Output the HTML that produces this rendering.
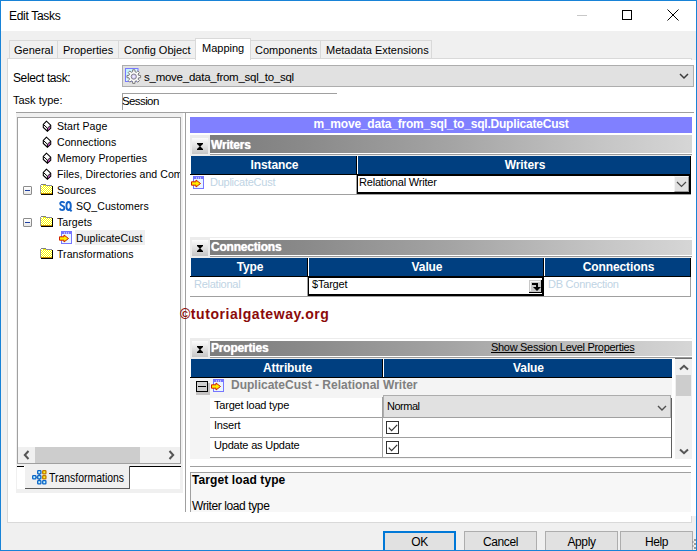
<!DOCTYPE html>
<html><head><meta charset="utf-8">
<style>
*{box-sizing:border-box;margin:0;padding:0}
html,body{width:697px;height:551px;overflow:hidden;background:#f0f0f0;font-family:"Liberation Sans",sans-serif;color:#000}
.a{position:absolute}
.t{position:absolute;white-space:nowrap;font-size:11px;line-height:13px}
.g{font-size:11px;letter-spacing:0.05px;transform:scaleX(0.96);transform-origin:0 0}
.mb{width:9px;height:9px;border:1px solid #8c8c8c;border-radius:1px;background:linear-gradient(#fff,#e6e6e6)}
.mb::after{content:"";position:absolute;left:1px;top:3px;width:5px;height:1px;background:#2040a0}
.sec{background:#ececec}
.btn{width:16px;height:16px;background:linear-gradient(#fcfcfc,#c6c6c6)}
.bar{background:linear-gradient(90deg,#7c7c7c,#8a8a8a 20%,#a4a4a4 50%,#c4c4c4 80%,#d6d6d6)}
.bt{font-weight:bold;color:#fff;font-size:12px;letter-spacing:-0.2px;line-height:14px;text-shadow:0 0 1px #fff}
.nv{background:#003f80}
.hd{font-weight:bold;color:#fff;font-size:12px;text-align:center;letter-spacing:-0.1px;line-height:14px;padding-left:2px}
.dis{color:#c0d4e4;font-size:11px;letter-spacing:-0.25px}
.gr{font-size:11px;letter-spacing:-0.2px}
.cb{width:13px;height:13px;border:1px solid #333;background:#fff}
.b{font-weight:bold;font-size:12px;letter-spacing:-0.2px;line-height:14px}
.u{font-size:12px;letter-spacing:-0.4px;line-height:14px}
</style></head><body>
<!-- title bar -->
<div class="a" style="left:0;top:0;width:697px;height:31px;background:#fff"></div>
<div class="t u" style="left:9px;top:9px;letter-spacing:-0.3px">Edit Tasks</div>
<div class="a" style="left:577px;top:15px;width:10px;height:1px;background:#c8c8c8"></div>
<div class="a" style="left:622px;top:10px;width:10px;height:10px;border:1px solid #000"></div>
<svg class="a" style="left:667px;top:9px" width="12" height="12"><path d="M0.5 0.5L11.5 11.5M11.5 0.5L0.5 11.5" stroke="#000" stroke-width="1"/></svg>

<!-- tabs -->
<div class="a" style="left:9px;top:40px;width:423px;height:19px;background:#f0f0f0;border:1px solid #d9d9d9;border-bottom:none"></div>
<div class="a" style="left:57px;top:40px;width:1px;height:18px;background:#d9d9d9"></div>
<div class="a" style="left:118px;top:40px;width:1px;height:18px;background:#d9d9d9"></div>
<div class="a" style="left:320px;top:40px;width:1px;height:18px;background:#d9d9d9"></div>
<!-- panel -->
<div class="a" style="left:7px;top:58px;width:689px;height:465px;background:#fff;border:1px solid #d9d9d9;border-right:none"></div>
<div class="a" style="left:692px;top:58px;width:4px;height:2px;background:#f0f0f0"></div>
<div class="a" style="left:691px;top:58px;width:1px;height:2px;background:#d9d9d9"></div>
<div class="a" style="left:691px;top:516px;width:1px;height:7px;background:#d9d9d9"></div>
<div class="a" style="left:692px;top:516px;width:4px;height:7px;background:#f0f0f0"></div>
<!-- selected tab -->
<div class="a" style="left:195px;top:38px;width:56px;height:22px;background:#fff;border:1px solid #d9d9d9;border-bottom:none"></div>
<div class="t" style="left:14px;top:44px">General</div>
<div class="t" style="left:63px;top:44px">Properties</div>
<div class="t" style="left:124px;top:44px">Config Object</div>
<div class="t" style="left:202px;top:42px">Mapping</div>
<div class="t" style="left:255px;top:44px">Components</div>
<div class="t" style="left:326px;top:44px">Metadata Extensions</div>

<!-- select task -->
<div class="t u" style="left:13px;top:71px">Select task:</div>
<div class="a" style="left:122px;top:65px;width:572px;height:22px;background:#e1e1e1;border:1px solid #adadad"></div>
<svg class="a" style="left:125px;top:68px" width="18" height="18" viewBox="0 0 18 18">
<defs><linearGradient id="gb" x1="0" y1="0" x2="1" y2="1"><stop offset="0" stop-color="#b8f0ff"/><stop offset="1" stop-color="#fff"/></linearGradient>
<radialGradient id="gc"><stop offset="0" stop-color="#fff"/><stop offset="1" stop-color="#b8a8f0"/></radialGradient></defs>
<rect x="0.5" y="0.5" width="12.5" height="13" fill="url(#gb)" stroke="#7878ff" stroke-width="1"/>
<path d="M15.61 7.47L15.61 9.73L13.65 9.81L13.08 11.18L14.41 12.61L12.81 14.21L11.38 12.88L10.01 13.45L9.93 15.41L7.67 15.41L7.59 13.45L6.22 12.88L4.79 14.21L3.19 12.61L4.52 11.18L3.950 9.81L1.99 9.73L1.99 7.47L3.95 7.39L4.52 6.02L3.19 4.59L4.79 2.99L6.22 4.32L7.59 3.75L7.67 1.79L9.930 1.79L10.01 3.75L11.38 4.32L12.81 2.99L14.41 4.59L13.08 6.02L13.65 7.39Z" fill="#fafafa" stroke="#7a7a7a" stroke-width="1"/>
<circle cx="8.8" cy="8.6" r="2.6" fill="url(#gc)" stroke="#8a8a8a" stroke-width="1"/>
</svg>
<div class="t" style="left:144px;top:71px;font-size:11.5px;letter-spacing:-0.25px">s_move_data_from_sql_to_sql</div>
<svg class="a" style="left:679px;top:73px" width="11" height="7"><path d="M1 1L5 5L9 1" fill="none" stroke="#3c3c3c" stroke-width="1.5"/></svg>

<div class="t" style="left:13px;top:94px">Task type:</div>
<div class="a" style="left:122px;top:93px;width:215px;height:1px;background:#a0a0a0"></div>
<div class="a" style="left:122px;top:93px;width:1px;height:17px;background:#a0a0a0"></div>
<div class="t" style="left:122px;top:95px;font-size:11.5px;letter-spacing:-0.6px">Session</div>

<!-- splitter line -->
<div class="a" style="left:16px;top:112px;width:678px;height:1px;background:#a0a0a0"></div>
<div class="a" style="left:16px;top:113px;width:167px;height:380px;background:#f0f0f0"></div>
<div class="a" style="left:185px;top:113px;width:1px;height:399px;background:#a0a0a0"></div>

<!-- tree box -->
<div class="a" style="left:17px;top:117px;width:164px;height:347px;background:#fff;border:1px solid #a0a0a0"></div>

<!-- tree items -->
<svg class="a" style="left:42px;top:120px" width="11" height="13" viewBox="0 0 11 13"><path d="M4.5 1.2L1.3 4.4L1.3 7.5L5.4 11.2L8.7 8.3L8.7 5.2Z" fill="#fff" stroke="#000" stroke-width="1.1" stroke-linejoin="miter"/><path d="M1.3 4.4L5.4 8.2L8.7 5.2M5.4 8.2L5.4 11.2" fill="none" stroke="#000" stroke-width="1"/><path d="M5.9 8.9L8.2 6.6L8.2 8.1L5.9 10.3Z" fill="#8a008a"/></svg>
<svg class="a" style="left:42px;top:136px" width="11" height="13" viewBox="0 0 11 13"><path d="M4.5 1.2L1.3 4.4L1.3 7.5L5.4 11.2L8.7 8.3L8.7 5.2Z" fill="#fff" stroke="#000" stroke-width="1.1" stroke-linejoin="miter"/><path d="M1.3 4.4L5.4 8.2L8.7 5.2M5.4 8.2L5.4 11.2" fill="none" stroke="#000" stroke-width="1"/><path d="M5.9 8.9L8.2 6.6L8.2 8.1L5.9 10.3Z" fill="#8a008a"/></svg>
<svg class="a" style="left:42px;top:152px" width="11" height="13" viewBox="0 0 11 13"><path d="M4.5 1.2L1.3 4.4L1.3 7.5L5.4 11.2L8.7 8.3L8.7 5.2Z" fill="#fff" stroke="#000" stroke-width="1.1" stroke-linejoin="miter"/><path d="M1.3 4.4L5.4 8.2L8.7 5.2M5.4 8.2L5.4 11.2" fill="none" stroke="#000" stroke-width="1"/><path d="M5.9 8.9L8.2 6.6L8.2 8.1L5.9 10.3Z" fill="#8a008a"/></svg>
<svg class="a" style="left:42px;top:168px" width="11" height="13" viewBox="0 0 11 13"><path d="M4.5 1.2L1.3 4.4L1.3 7.5L5.4 11.2L8.7 8.3L8.7 5.2Z" fill="#fff" stroke="#000" stroke-width="1.1" stroke-linejoin="miter"/><path d="M1.3 4.4L5.4 8.2L8.7 5.2M5.4 8.2L5.4 11.2" fill="none" stroke="#000" stroke-width="1"/><path d="M5.9 8.9L8.2 6.6L8.2 8.1L5.9 10.3Z" fill="#8a008a"/></svg>
<div class="t g" style="left:57px;top:120px">Start Page</div>
<div class="t g" style="left:57px;top:136px">Connections</div>
<div class="t g" style="left:57px;top:152px">Memory Properties</div>
<div class="a" style="left:18px;top:165px;width:162px;height:16px;overflow:hidden"><div class="t g" style="left:39px;top:3px">Files, Directories and Commands</div></div>
<!-- minus boxes -->
<div class="a mb" style="left:23px;top:186px"></div>
<div class="a mb" style="left:23px;top:218px"></div>
<!-- folders -->
<svg class="a" style="left:40px;top:184px" width="14" height="12" viewBox="0 0 14 12" shape-rendering="crispEdges"><defs><pattern id="dz184" width="2" height="2" patternUnits="userSpaceOnUse"><rect width="2" height="2" fill="#ffff00"/><rect x="1" y="1" width="1" height="1" fill="#ffffff"/><rect x="0" y="0" width="1" height="1" fill="#ffffff"/></pattern></defs><rect x="0" y="1" width="1" height="9" fill="#9a9aa8"/><rect x="1" y="0" width="5" height="1" fill="#808080"/><rect x="1" y="1" width="2" height="1" fill="#fff"/><rect x="3" y="1" width="3" height="1" fill="#f0f000"/><rect x="6" y="1" width="6" height="1" fill="#8a8aa0"/><rect x="1" y="2" width="11" height="7" fill="url(#dz184)"/><rect x="1" y="9" width="11" height="1" fill="#c89000"/><rect x="12" y="2" width="1" height="9" fill="#000"/><rect x="1" y="10" width="12" height="1" fill="#000"/></svg>
<svg class="a" style="left:40px;top:216px" width="14" height="12" viewBox="0 0 14 12" shape-rendering="crispEdges"><defs><pattern id="dz216" width="2" height="2" patternUnits="userSpaceOnUse"><rect width="2" height="2" fill="#ffff00"/><rect x="1" y="1" width="1" height="1" fill="#ffffff"/><rect x="0" y="0" width="1" height="1" fill="#ffffff"/></pattern></defs><rect x="0" y="1" width="1" height="9" fill="#9a9aa8"/><rect x="1" y="0" width="5" height="1" fill="#808080"/><rect x="1" y="1" width="2" height="1" fill="#fff"/><rect x="3" y="1" width="3" height="1" fill="#f0f000"/><rect x="6" y="1" width="6" height="1" fill="#8a8aa0"/><rect x="1" y="2" width="11" height="7" fill="url(#dz216)"/><rect x="1" y="9" width="11" height="1" fill="#c89000"/><rect x="12" y="2" width="1" height="9" fill="#000"/><rect x="1" y="10" width="12" height="1" fill="#000"/></svg>
<svg class="a" style="left:40px;top:248px" width="14" height="12" viewBox="0 0 14 12" shape-rendering="crispEdges"><defs><pattern id="dz248" width="2" height="2" patternUnits="userSpaceOnUse"><rect width="2" height="2" fill="#ffff00"/><rect x="1" y="1" width="1" height="1" fill="#ffffff"/><rect x="0" y="0" width="1" height="1" fill="#ffffff"/></pattern></defs><rect x="0" y="1" width="1" height="9" fill="#9a9aa8"/><rect x="1" y="0" width="5" height="1" fill="#808080"/><rect x="1" y="1" width="2" height="1" fill="#fff"/><rect x="3" y="1" width="3" height="1" fill="#f0f000"/><rect x="6" y="1" width="6" height="1" fill="#8a8aa0"/><rect x="1" y="2" width="11" height="7" fill="url(#dz248)"/><rect x="1" y="9" width="11" height="1" fill="#c89000"/><rect x="12" y="2" width="1" height="9" fill="#000"/><rect x="1" y="10" width="12" height="1" fill="#000"/></svg>
<div class="t g" style="left:57px;top:184px">Sources</div>
<svg class="a" style="left:59px;top:201px" width="14" height="11" viewBox="0 0 14 11"><path d="M5.3 2.2C5.2 1.2 4.3 0.9 3.2 0.9C1.9 0.9 1.2 1.6 1.2 2.6C1.2 3.8 2.2 4.3 3.2 4.7C4.3 5.1 5.4 5.6 5.4 7C5.4 8.3 4.5 9.1 3.1 9.1C1.8 9.1 1 8.5 0.9 7.4" fill="none" stroke="#1464c8" stroke-width="1.9"/><ellipse cx="9.6" cy="5" rx="2.2" ry="4.05" fill="none" stroke="#1464c8" stroke-width="1.9"/><path d="M10.2 7.6L12.6 10.4" stroke="#1464c8" stroke-width="1.9"/></svg>
<div class="t g" style="left:76px;top:200px">SQ_Customers</div>
<div class="t g" style="left:57px;top:216px">Targets</div>
<div class="a" style="left:75px;top:230px;width:70px;height:15px;background:#efefef"></div>
<svg class="a tgt" style="left:59px;top:231px" width="13" height="14" viewBox="0 0 13 14"><rect x="2.5" y="0.5" width="10" height="12" fill="#eaf6ff" stroke="#7676ff"/><rect x="3" y="1" width="9" height="2" fill="#7676ff"/><rect x="5" y="1.5" width="1" height="1" fill="#fff"/><rect x="7" y="1.5" width="1" height="1" fill="#fff"/><rect x="9" y="1.5" width="1" height="1" fill="#fff"/><path d="M0.5 5.8L5 5.8L5 4L9.5 7.5L5 11L5 9.2L0.5 9.2Z" fill="#ffee00" stroke="#d02000" stroke-width="1"/></svg>
<div class="t g" style="left:76px;top:232px">DuplicateCust</div>
<div class="t g" style="left:57px;top:248px">Transformations</div>

<!-- tree h-scroll -->
<div class="a" style="left:18px;top:447px;width:162px;height:16px;background:#f0f0f0"></div>
<div class="a" style="left:35px;top:447px;width:105px;height:16px;background:#cdcdcd"></div>
<svg class="a" style="left:22px;top:450px" width="10" height="10"><path d="M6.5 1L2.8 5L6.5 9" fill="none" stroke="#555" stroke-width="2"/></svg>
<svg class="a" style="left:167px;top:450px" width="10" height="10"><path d="M2.5 1L6.2 5L2.5 9" fill="none" stroke="#555" stroke-width="2"/></svg>
<!-- left tab strip -->
<div class="a" style="left:16px;top:465px;width:167px;height:28px;background:#f0f0f0"></div>
<div class="a" style="left:17px;top:466px;width:163px;height:23px;background:#fff"></div>
<div class="a" style="left:17px;top:466px;width:7px;height:1px;background:#000"></div>
<div class="a" style="left:129px;top:466px;width:52px;height:1px;background:#000"></div>
<div class="a" style="left:25px;top:466px;width:105px;height:23px;background:#f0f0f0;border-right:1px solid #5a5a5a;border-bottom:1px solid #5a5a5a"></div>
<svg class="a" style="left:32px;top:470px" width="15" height="15" viewBox="0 0 15 15"><path d="M4 7.2H5.5M7.2 4V5.5M7.2 9V10.5" stroke="#404040" stroke-width="1"/><rect x="5.7" y="0.7" width="3.2" height="3.2" rx="0.6" fill="#c8f8ff" stroke="#0a64c8" stroke-width="1.3"/><rect x="10.7" y="0.7" width="3.2" height="3.2" rx="0.6" fill="#f8f020" stroke="#c07800" stroke-width="1.3"/><rect x="0.7" y="5.7" width="3.2" height="3.2" rx="0.6" fill="#c8f8ff" stroke="#0a64c8" stroke-width="1.3"/><rect x="5.7" y="5.7" width="3.2" height="3.2" rx="0.6" fill="#c8f8ff" stroke="#0a64c8" stroke-width="1.3"/><rect x="10.7" y="5.7" width="3.2" height="3.2" rx="0.6" fill="#f8f020" stroke="#c07800" stroke-width="1.3"/><rect x="5.7" y="10.7" width="3.2" height="3.2" rx="0.6" fill="#c8f8ff" stroke="#0a64c8" stroke-width="1.3"/><rect x="10.7" y="10.7" width="3.2" height="3.2" rx="0.6" fill="#c8f8ff" stroke="#0a64c8" stroke-width="1.3"/></svg>
<div class="t" style="left:49px;top:471px;font-size:12px;line-height:14px;transform:scaleX(0.87);transform-origin:0 0">Transformations</div>

<!-- RIGHT PANE -->
<div class="a" style="left:190px;top:117px;width:502px;height:16px;background:#8080ff"></div>
<div class="t b" style="left:190px;top:116.5px;width:502px;text-align:center;color:#fff">m_move_data_from_sql_to_sql.DuplicateCust</div>

<!-- Writers -->
<div class="a sec" style="left:190px;top:135px;width:502px;height:21px"></div>
<div class="a" style="left:210px;top:153px;width:482px;height:1px;background:#fff"></div>
<div class="a" style="left:210px;top:154px;width:482px;height:1px;background:#9a9a9a"></div>
<div class="a btn" style="left:192px;top:138px"></div>
<svg class="a" style="left:197px;top:143px" width="6" height="7"><path d="M0 0H6V0.9L3.4 3.5L6 6.1V7H0V6.1L2.6 3.5L0 0.9Z" fill="#000"/></svg>
<div class="a bar" style="left:210px;top:135px;width:482px;height:18px"></div>
<div class="t bt" style="left:211px;top:138px">Writers</div>
<div class="a nv" style="left:191px;top:156px;width:500px;height:18px"></div>
<div class="a" style="left:690px;top:156px;width:1px;height:18px;background:#000"></div>
<div class="a" style="left:356px;top:156px;width:1px;height:18px;background:#000"></div>
<div class="a" style="left:357px;top:156px;width:1px;height:18px;background:#fff"></div>
<div class="t hd" style="left:191px;top:158px;width:165px">Instance</div>
<div class="t hd" style="left:358px;top:158px;width:332px">Writers</div>
<div class="a" style="left:190px;top:174px;width:501px;height:1px;background:#000"></div>
<div class="a" style="left:356px;top:175px;width:1px;height:19px;background:#a0a0a0"></div>
<div class="a" style="left:190px;top:194px;width:501px;height:1px;background:#a0a0a0"></div>
<svg class="a tgt" style="left:191px;top:176px" width="13" height="14" viewBox="0 0 13 14"><rect x="2.5" y="0.5" width="10" height="12" fill="#eaf6ff" stroke="#7676ff"/><rect x="3" y="1" width="9" height="2" fill="#7676ff"/><rect x="5" y="1.5" width="1" height="1" fill="#fff"/><rect x="7" y="1.5" width="1" height="1" fill="#fff"/><rect x="9" y="1.5" width="1" height="1" fill="#fff"/><path d="M0.5 5.8L5 5.8L5 4L9.5 7.5L5 11L5 9.2L0.5 9.2Z" fill="#ffee00" stroke="#d02000" stroke-width="1"/></svg>
<div class="t dis" style="left:210px;top:176px">DuplicateCust</div>
<div class="a" style="left:357px;top:174px;width:334px;height:20px;border:2px solid #000;border-left-width:1px;background:#fff"></div>
<div class="t gr" style="left:359px;top:176px">Relational Writer</div>
<div class="a" style="left:674px;top:176px;width:15px;height:16px;background:#e1e1e1;border-left:1px solid #f4f4f4;border-top:1px solid #f4f4f4;border-right:1px solid #9a9a9a;border-bottom:1px solid #9a9a9a"></div>
<svg class="a" style="left:676px;top:181px" width="11" height="7"><path d="M1 1L5.5 5.5L10 1" fill="none" stroke="#4a4a4a" stroke-width="1.2"/></svg>

<!-- Connections -->
<div class="a sec" style="left:190px;top:237px;width:502px;height:21px"></div>
<div class="a" style="left:210px;top:238px;width:482px;height:2px;background:#fff"></div>
<div class="a" style="left:210px;top:255px;width:482px;height:1px;background:#fff"></div>
<div class="a" style="left:210px;top:256px;width:482px;height:1px;background:#9a9a9a"></div>
<div class="a btn" style="left:192px;top:240px"></div>
<svg class="a" style="left:197px;top:245px" width="6" height="7"><path d="M0 0H6V0.9L3.4 3.5L6 6.1V7H0V6.1L2.6 3.5L0 0.9Z" fill="#000"/></svg>
<div class="a bar" style="left:210px;top:240px;width:482px;height:15px"></div>
<div class="t bt" style="left:211px;top:240px">Connections</div>
<div class="a nv" style="left:191px;top:258px;width:500px;height:18px"></div>
<div class="a" style="left:690px;top:258px;width:1px;height:18px;background:#000"></div>
<div class="a" style="left:307px;top:258px;width:1px;height:18px;background:#000"></div>
<div class="a" style="left:308px;top:258px;width:1px;height:18px;background:#fff"></div>
<div class="a" style="left:543px;top:258px;width:1px;height:18px;background:#000"></div>
<div class="a" style="left:544px;top:258px;width:1px;height:18px;background:#fff"></div>
<div class="t hd" style="left:191px;top:260px;width:116px">Type</div>
<div class="t hd" style="left:309px;top:260px;width:234px">Value</div>
<div class="t hd" style="left:545px;top:260px;width:145px">Connections</div>
<div class="a" style="left:190px;top:276px;width:501px;height:1px;background:#000"></div>
<div class="a" style="left:307px;top:277px;width:1px;height:19px;background:#a0a0a0"></div>
<div class="a" style="left:190px;top:296px;width:501px;height:1px;background:#a0a0a0"></div>
<div class="a" style="left:690px;top:277px;width:1px;height:20px;background:#a0a0a0"></div>
<div class="t dis" style="left:194px;top:278px">Relational</div>
<div class="a" style="left:308px;top:276px;width:236px;height:20px;border:2px solid #000;border-left-width:1.5px;background:#fff"></div>
<div class="t gr" style="left:312px;top:278px">$Target</div>
<svg class="a" style="left:529px;top:280px" width="13" height="14" viewBox="0 0 13 14" shape-rendering="crispEdges">
<rect x="0" y="0" width="13" height="13" fill="#c8c8c8"/>
<rect x="1" y="1" width="10" height="1" fill="#f4f4f4"/><rect x="1" y="1" width="1" height="10" fill="#f4f4f4"/>
<rect x="0" y="12" width="13" height="1" fill="#000"/><rect x="12" y="0" width="1" height="13" fill="#000"/>
<rect x="3" y="3" width="5" height="2" fill="#000"/><rect x="7" y="3" width="2" height="5" fill="#000"/>
<path d="M4 7H12L8 11Z" fill="#000" shape-rendering="auto"/></svg>
<div class="t dis" style="left:548px;top:278px">DB Connection</div>

<!-- watermark -->
<div class="t" style="left:180px;top:306px;font-size:14px;font-weight:bold;color:#8b0a0a;letter-spacing:0.55px;line-height:17px">©tutorialgateway.org</div>

<!-- Properties -->
<div class="a sec" style="left:190px;top:338px;width:502px;height:21px"></div>
<div class="a" style="left:210px;top:339px;width:482px;height:2px;background:#fff"></div>
<div class="a" style="left:210px;top:356px;width:482px;height:1px;background:#fff"></div>
<div class="a" style="left:210px;top:357px;width:482px;height:1px;background:#9a9a9a"></div>
<div class="a btn" style="left:192px;top:341px"></div>
<svg class="a" style="left:197px;top:346px" width="6" height="7"><path d="M0 0H6V0.9L3.4 3.5L6 6.1V7H0V6.1L2.6 3.5L0 0.9Z" fill="#000"/></svg>
<div class="a bar" style="left:210px;top:341px;width:482px;height:15px"></div>
<div class="t bt" style="left:211px;top:341px">Properties</div>
<div class="t" style="left:491px;top:341px;font-size:11px;letter-spacing:-0.3px;text-decoration:underline;color:#000">Show Session Level Properties</div>
<div class="a nv" style="left:191px;top:359px;width:481px;height:18px"></div>
<div class="a" style="left:382px;top:359px;width:1px;height:18px;background:#000"></div>
<div class="a" style="left:383px;top:359px;width:1px;height:18px;background:#fff"></div>
<div class="t hd" style="left:191px;top:361px;width:191px">Attribute</div>
<div class="t hd" style="left:384px;top:361px;width:287px">Value</div>
<div class="a" style="left:190px;top:377px;width:482px;height:1px;background:#000"></div>
<div class="a" style="left:190px;top:378px;width:482px;height:81px;background:#f4f4f4"></div>
<div class="a" style="left:210px;top:398px;width:462px;height:60px;background:#fff"></div>
<div class="a" style="left:210px;top:417px;width:462px;height:1px;background:#a0a0a0"></div>
<div class="a" style="left:210px;top:437px;width:462px;height:1px;background:#a0a0a0"></div>
<div class="a" style="left:210px;top:457px;width:462px;height:1px;background:#a0a0a0"></div>
<div class="a" style="left:382px;top:397px;width:1px;height:61px;background:#a0a0a0"></div>
<div class="a" style="left:671px;top:398px;width:1px;height:60px;background:#606060"></div>
<div class="a" style="left:196px;top:383px;width:14px;height:12px;background:#c4c2c2"></div>
<div class="a" style="left:196px;top:381px;width:12px;height:11px;background:#d0d0d0;border:1px solid #000"></div>
<div class="a" style="left:198px;top:386px;width:8px;height:1.3px;background:#000"></div>
<svg class="a tgt" style="left:211px;top:379px" width="13" height="14" viewBox="0 0 13 14"><rect x="2.5" y="0.5" width="10" height="12" fill="#eaf6ff" stroke="#7676ff"/><rect x="3" y="1" width="9" height="2" fill="#7676ff"/><rect x="5" y="1.5" width="1" height="1" fill="#fff"/><rect x="7" y="1.5" width="1" height="1" fill="#fff"/><rect x="9" y="1.5" width="1" height="1" fill="#fff"/><path d="M0.5 5.8L5 5.8L5 4L9.5 7.5L5 11L5 9.2L0.5 9.2Z" fill="#ffee00" stroke="#d02000" stroke-width="1"/></svg>
<div class="t" style="left:231px;top:378px;font-weight:bold;color:#808080;font-size:12px;letter-spacing:0px;line-height:14px">DuplicateCust - Relational Writer</div>
<div class="t gr" style="left:214px;top:399px">Target load type</div>
<div class="t gr" style="left:214px;top:419px">Insert</div>
<div class="t gr" style="left:214px;top:439px">Update as Update</div>
<div class="a" style="left:383px;top:395px;width:288px;height:22px;background:#e1e1e1;border:1px solid #adadad;border-bottom:none"></div>
<div class="t gr" style="left:387px;top:400px;letter-spacing:-0.5px">Normal</div>
<svg class="a" style="left:657px;top:405px" width="11" height="8"><path d="M1 1L5 5L9 1" fill="none" stroke="#505050" stroke-width="1.4"/></svg>
<div class="a cb" style="left:386px;top:421px"></div>
<svg class="a" style="left:388px;top:424px" width="10" height="8"><path d="M0.8 3.6L3.6 6.6L9.2 0.8" fill="none" stroke="#333" stroke-width="1.2"/></svg>
<div class="a cb" style="left:386px;top:441px"></div>
<svg class="a" style="left:388px;top:444px" width="10" height="8"><path d="M0.8 3.6L3.6 6.6L9.2 0.8" fill="none" stroke="#333" stroke-width="1.2"/></svg>
<!-- v scrollbar -->
<div class="a" style="left:675px;top:358px;width:17px;height:101px;background:#f0f0f0;border-top:1px solid #707070"></div>
<div class="a" style="left:676px;top:375px;width:15px;height:21px;background:#cdcdcd"></div>
<svg class="a" style="left:679px;top:364px" width="10" height="7"><path d="M1 5.5L5 1.8L9 5.5" fill="none" stroke="#555" stroke-width="2"/></svg>
<svg class="a" style="left:679px;top:448px" width="10" height="7"><path d="M1 1.5L5 5.2L9 1.5" fill="none" stroke="#555" stroke-width="2"/></svg>

<div class="a" style="left:190px;top:466px;width:501px;height:1px;background:#a0a0a0"></div>
<!-- description -->
<div class="a" style="left:190px;top:472px;width:501px;height:40px;background:#f7f7f7;border-top:1px solid #a0a0a0;border-left:1px solid #a0a0a0"></div>
<div class="t" style="left:192px;top:473px;font-weight:bold;font-size:12px;letter-spacing:0.1px;line-height:14px">Target load type</div>
<div class="t u" style="left:192px;top:499px">Writer load type</div>

<!-- dialog buttons -->
<div class="a" style="left:383px;top:531px;width:73px;height:25px;background:#e1e1e1;border:2px solid #0078d7"></div>
<div class="a" style="left:464px;top:531px;width:73px;height:25px;background:#e1e1e1;border:1px solid #adadad"></div>
<div class="a" style="left:545px;top:531px;width:73px;height:25px;background:#e1e1e1;border:1px solid #adadad"></div>
<div class="a" style="left:620px;top:531px;width:73px;height:25px;background:#e1e1e1;border:1px solid #adadad"></div>
<div class="t u" style="left:383px;top:535px;width:73px;text-align:center">OK</div>
<div class="t u" style="left:464px;top:535px;width:73px;text-align:center">Cancel</div>
<div class="t u" style="left:545px;top:535px;width:73px;text-align:center">Apply</div>
<div class="t u" style="left:620px;top:535px;width:73px;text-align:center">Help</div>

<svg class="a" style="left:692px;top:538px" width="4" height="12"><g fill="#9a9a9a"><rect x="2" y="1" width="2" height="2"/><rect x="2" y="5" width="2" height="2"/><rect x="2" y="9" width="2" height="2"/><rect x="0" y="3" width="1.5" height="2"/><rect x="0" y="7" width="1.5" height="2"/></g></svg>
<!-- window border -->
<div class="a" style="left:0;top:0;width:697px;height:1px;background:#1883d7"></div>
<div class="a" style="left:0;top:0;width:1px;height:551px;background:#1883d7"></div>
<div class="a" style="left:696px;top:0;width:1px;height:551px;background:#1883d7"></div>
<div class="a" style="left:0;top:550px;width:697px;height:1px;background:#1883d7"></div>
</body></html>
